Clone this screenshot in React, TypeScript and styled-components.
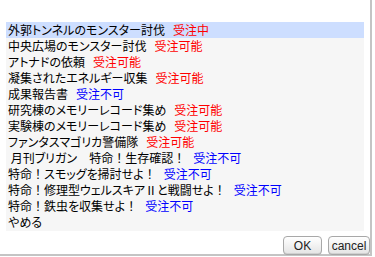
import React from 'react';
import styled, { createGlobalStyle } from 'styled-components';

const GlobalStyle = createGlobalStyle`
  html, body {
    margin: 0;
    padding: 0;
    background: #ffffff;
  }
`;

type Status = 'active' | 'open' | 'closed';

interface Quest {
  title: string;
  status?: Status;
}

const statusLabel: Record<Status, string> = {
  active: '受注中',
  open: '受注可能',
  closed: '受注不可',
};

const quests: Quest[] = [
  { title: '外郭トンネルのモンスター討伐', status: 'active' },
  { title: '中央広場のモンスター討伐', status: 'open' },
  { title: 'アトナドの依頼', status: 'open' },
  { title: '凝集されたエネルギー収集', status: 'open' },
  { title: '成果報告書', status: 'closed' },
  { title: '研究棟のメモリーレコード集め', status: 'open' },
  { title: '実験棟のメモリーレコード集め', status: 'open' },
  { title: 'ファンタスマゴリカ警備隊', status: 'open' },
  { title: ' 月刊ブリガン　特命！生存確認！', status: 'closed' },
  { title: '特命！スモッグを掃討せよ！', status: 'closed' },
  { title: '特命！修理型ウェルスキアⅡと戦闘せよ！', status: 'closed' },
  { title: '特命！鉄虫を収集せよ！', status: 'closed' },
  { title: 'やめる' },
];

const Screen = styled.div`
  width: 375px;
  height: 257px;
  background: #ffffff;
  overflow: hidden;
`;

const Dialog = styled.div`
  width: 372px;
  height: 256px;
  border-right: 2px solid #c4c4c4;
  border-bottom: 2px solid #c4c4c4;
  display: flex;
  flex-direction: column;
  padding-top: 22px;
  box-sizing: border-box;
`;

const List = styled.div`
  margin-left: 6px;
  width: 358px;
  padding-bottom: 1px;
  background: #f6f6f6;
  display: flex;
  flex-direction: column;
`;

const Row = styled.div<{ $selected?: boolean }>`
  height: 16px;
  line-height: 16px;
  padding-left: 2px;
  font-family: 'Noto Sans CJK JP', 'Noto Sans', sans-serif;
  font-size: 12px;
  font-feature-settings: 'palt';
  color: #000000;
  white-space: pre;
  background: ${({ $selected }) => ($selected ? '#cddeff' : 'transparent')};
`;

// full-width punctuation keeps its em width, like the original bitmap font
const FullWidth = styled.span`
  font-feature-settings: normal;
`;

const StatusText = styled.span<{ $status: Status }>`
  margin-left: 8px;
  color: ${({ $status }) => ($status === 'closed' ? '#0000ff' : '#ff0000')};
`;

const Footer = styled.div`
  display: flex;
  justify-content: flex-end;
  gap: 6px;
  margin-top: 5px;
`;

const Button = styled.button<{ $width: number }>`
  width: ${({ $width }) => $width}px;
  height: 19px;
  padding: 0;
  border: 1px solid #a8a8a8;
  border-radius: 4px;
  background: linear-gradient(#ffffff, #e4e4e4);
  box-shadow: inset 0 -1px 0 #d0d0d0;
  font-family: 'Liberation Sans', Arial, sans-serif;
  font-size: 12px;
  color: #222222;
`;

const renderTitle = (title: string) =>
  title.split(/(！)/).map((part, i) =>
    part === '！' ? <FullWidth key={i}>{part}</FullWidth> : part
  );

const App = () => {
  return (
    <Screen>
      <GlobalStyle />
      <Dialog>
        <List>
          {quests.map((q, idx) => (
            <Row key={idx} $selected={idx === 0}>
              {renderTitle(q.title)}
              {q.status && <StatusText $status={q.status}>{statusLabel[q.status]}</StatusText>}
            </Row>
          ))}
        </List>
        <Footer>
          <Button $width={39}>OK</Button>
          <Button $width={42}>cancel</Button>
        </Footer>
      </Dialog>
    </Screen>
  );
};

export default App;
